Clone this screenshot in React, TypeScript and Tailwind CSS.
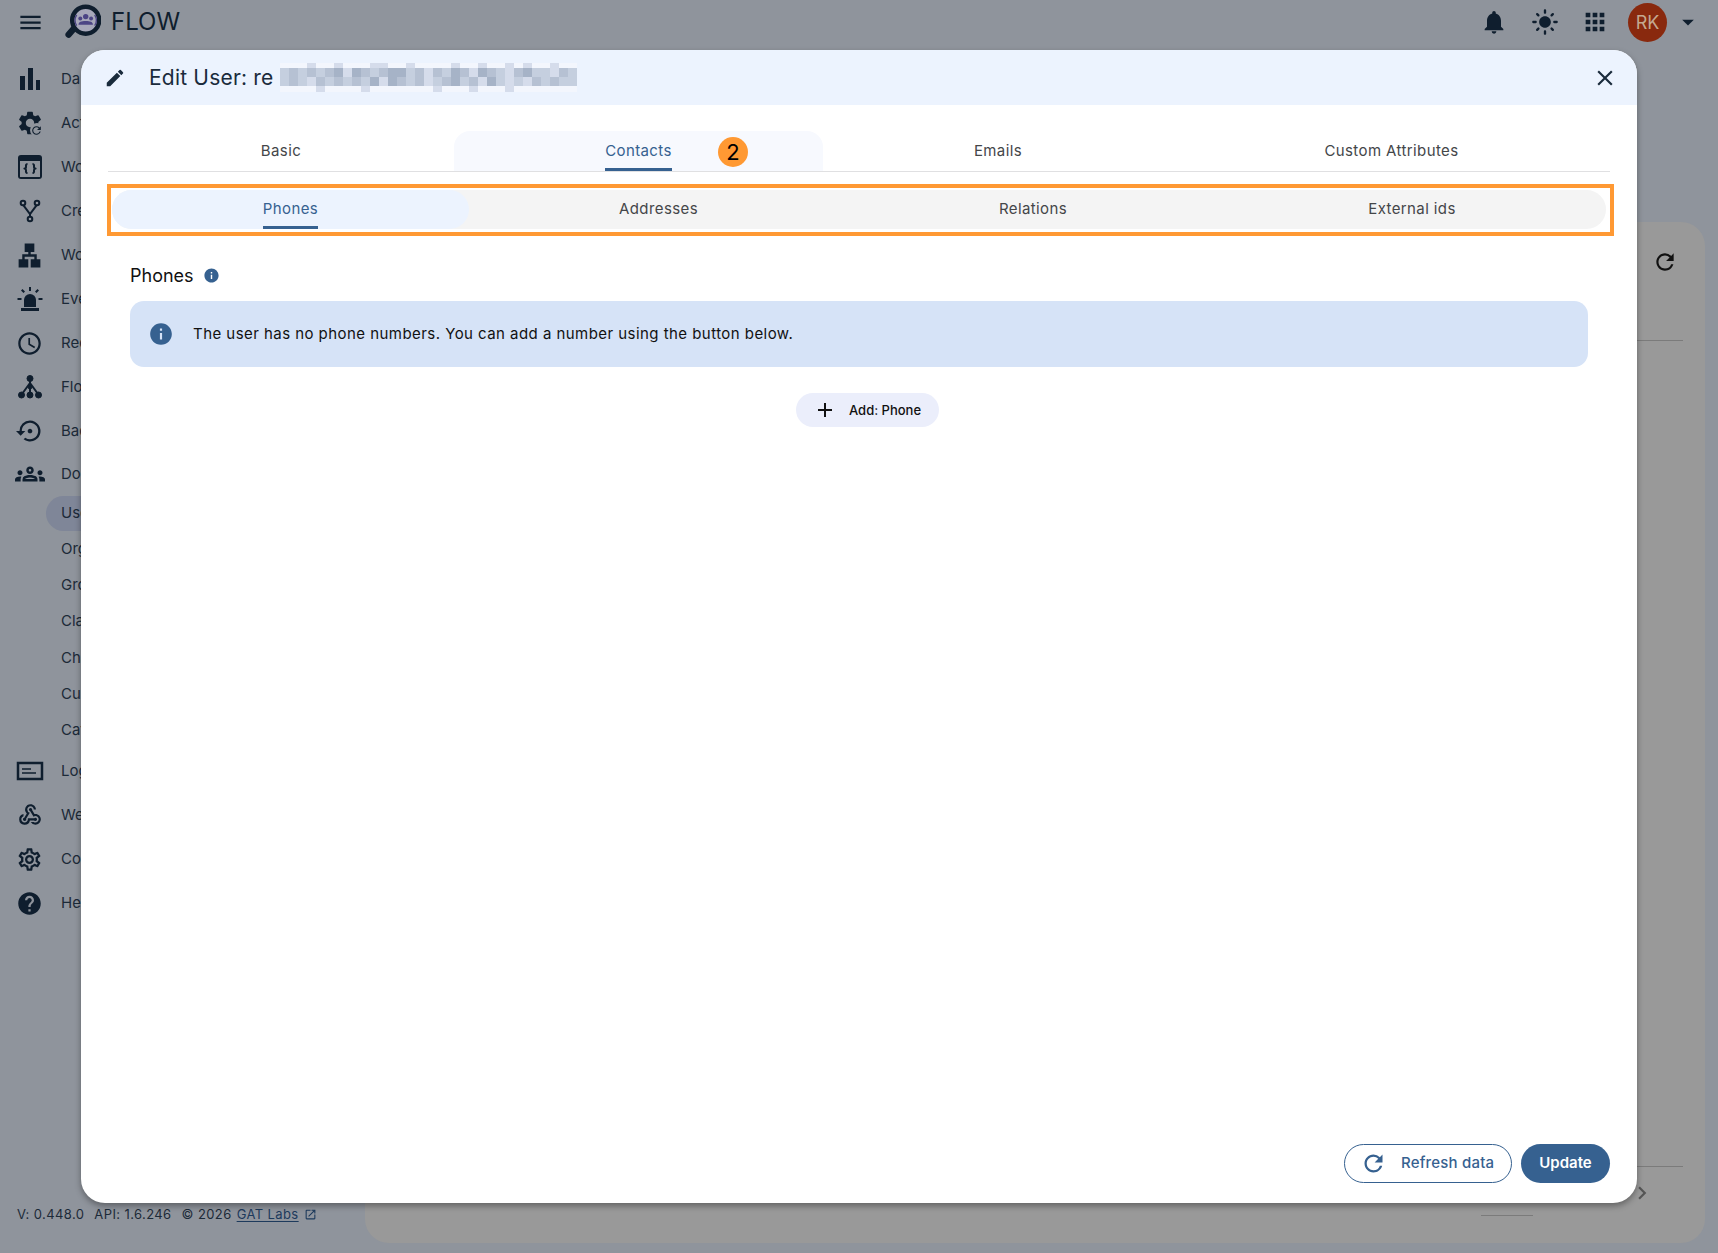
import type { ReactNode } from 'react';
import {
  MdAdd,
  MdApps,
  MdArrowDropDown,
  MdChevronRight,
  MdClose,
  MdEdit,
  MdHelp,
  MdInfo,
  MdLan,
  MdLightMode,
  MdMenu,
  MdNotifications,
  MdOpenInNew,
  MdOutlineGroups,
  MdOutlineSchedule,
  MdOutlineSettings,
  MdOutlineWebhook,
  MdRefresh,
  MdSettings,
  MdSettingsBackupRestore,
} from 'react-icons/md';

const iconClass = 'text-[#0f1e2e]';

function BarsIcon() {
  return (
    <svg width="28" height="28" viewBox="0 0 28 28" fill="#0f1e2e">
      <rect x="4" y="11" width="5" height="14" />
      <rect x="12" y="3" width="5" height="22" />
      <rect x="20" y="15" width="4" height="10" />
    </svg>
  );
}

function ActionsIcon() {
  return (
    <span className="relative block h-7 w-7">
      <MdSettings size={28} className={iconClass} />
      <span className="absolute right-0 bottom-0 flex h-[14px] w-[14px] items-center justify-center rounded-full bg-[#8f949c]">
        <MdRefresh size={13} className={iconClass} />
      </span>
    </span>
  );
}

function CodeWindowIcon() {
  return (
    <svg width="28" height="28" viewBox="0 0 28 28">
      <rect x="2" y="2" width="24" height="24" rx="3" fill="#0f1e2e" />
      <rect x="4" y="8" width="20" height="16" fill="#8f949c" />
      <path
        d="M11.5 11c-2 0-1.5 2-1.5 3s-1 1.5-1.5 1.5 1.5.5 1.5 1.5-.5 3 1.5 3M16.5 11c2 0 1.5 2 1.5 3s1 1.5 1.5 1.5-1.500.5-1.500 1.500.5 3-1.500 3"
        fill="none"
        stroke="#0f1e2e"
        strokeWidth="2"
      />
    </svg>
  );
}

function ForkIcon() {
  return (
    <svg width="28" height="28" viewBox="0 0 28 28" fill="none" stroke="#0f1e2e" strokeWidth="2">
      <circle cx="7" cy="6" r="2.300" />
      <circle cx="21" cy="6" r="2.300" />
      <circle cx="14" cy="22" r="2.300" />
      <path d="M7.500 8.300L14 17L20.500 8.300M14 17v2.700" />
    </svg>
  );
}

function SirenIcon() {
  return (
    <svg width="28" height="28" viewBox="0 0 28 28" fill="#0f1e2e">
      <rect x="5" y="23" width="18" height="3" />
      <path d="M8 22v-7a6 6 0 0 1 12 0v7z" />
      <rect x="13" y="2" width="2" height="4" />
      <rect x="1.500" y="13" width="4" height="2" />
      <rect x="22.500" y="13" width="4" height="2" />
      <path d="M5 5.500l1.500-1.500 2.500 2.500-1.500 1.500zM23 5.500l-1.500-1.500-2.500 2.500 1.500 1.500z" />
    </svg>
  );
}

function FlowIcon() {
  return (
    <svg width="28" height="28" viewBox="0 0 28 28" fill="#0f1e2e" stroke="#0f1e2e">
      <path d="M14 5v17M14 10l-8 11M14 10l8 11" strokeWidth="2" fill="none" />
      <circle cx="14" cy="5.500" r="3" />
      <circle cx="14" cy="14" r="2" />
      <circle cx="5.500" cy="22" r="3" />
      <circle cx="14" cy="22" r="3" />
      <circle cx="22.500" cy="22" r="3" />
    </svg>
  );
}

function LogIcon() {
  return (
    <svg width="28" height="28" viewBox="0 0 28 28" fill="none" stroke="#0f1e2e">
      <rect x="2" y="6" width="24" height="16" strokeWidth="2.500" />
      <path d="M6 12h9M6 16h14" strokeWidth="1.500" />
    </svg>
  );
}

function Logo() {
  return (
    <svg width="36" height="40" viewBox="0 0 40 44">
      <path d="M11 28L4 36" stroke="#0f1e2e" strokeWidth="7" strokeLinecap="round" />
      <circle cx="23" cy="20" r="15" fill="#a7a8ba" stroke="#0f1e2e" strokeWidth="5" />
      <circle cx="23" cy="16" r="3" fill="#4c4585" />
      <circle cx="17" cy="18" r="2.200" fill="#4c4585" />
      <circle cx="29" cy="18" r="2.200" fill="#4c4585" />
      <path d="M15 25c0-3 3-4 8-4s8 1 8 4z" fill="#4c4585" />
      <path d="M13 14a11 11 0 0 0 0 12M33 14a11 11 0 0 1 0 12" fill="none" stroke="#4c4585" strokeWidth="1.500" />
    </svg>
  );
}

function NavRow({ icon, label, className }: { icon: ReactNode; label: string; className: string }) {
  return (
    <div className={`flex items-center ${className}`}>
      <span className="flex w-[61px] justify-center pr-[2px]">{icon}</span>
      <span className="text-[15px] text-[#1c2a38]">{label}</span>
    </div>
  );
}

function SubRow({ label, active }: { label: string; active?: boolean }) {
  return (
    <div className="flex h-[36.2px] items-center">
      <div className={`ml-[46px] flex h-[35px] flex-1 items-center rounded-l-full pl-[15px] ${active ? 'bg-[#7f8698]' : ''}`}>
        <span className="text-[15px] text-[#1c2a38]">{label}</span>
      </div>
    </div>
  );
}

const mosaic = [
  '000100100011001000010010010100100',
  '232323414323442313243143213422132',
  '232132323241432312342314212132322',
  '000010000100000001000100010000000',
];
const mosaicColors = ['#f3f6fd', '#d5dceb', '#c5cfdf', '#b6c1d3', '#a6b3c7'];

// blurred part of the user name
function BlurredName() {
  return (
    <svg width="297" height="29" viewBox="0 0 297 29" className="ml-[6px] shrink-0">
      {mosaic.map((row, r) =>
        row.split('').map((c, i) => (
          <rect
            key={`${r}-${i}`}
            x={i * 9}
            y={r === 0 ? 0 : r === 1 ? 5 : r === 2 ? 14 : 23}
            width="9"
            height={r === 0 ? 5 : r === 3 ? 6 : 9}
            fill={mosaicColors[Number(c)]}
          />
        ))
      )}
    </svg>
  );
}

const mainTabs = [
  { label: 'Basic', className: 'w-[346px]' },
  { label: 'Contacts', className: 'w-[369px] rounded-t-2xl bg-[#f7f9fe]', active: true },
  { label: 'Emails', className: 'w-[350px]' },
  { label: 'Custom Attributes', className: 'w-[437px]' },
];

const subTabs = [
  { label: 'Phones', className: 'w-[357px] rounded-full bg-[#ecf3fe]', active: true },
  { label: 'Addresses', className: 'w-[379px]' },
  { label: 'Relations', className: 'w-[370px]' },
  { label: 'External ids', className: 'w-[388px]' },
];

function TabLabel({ label, active }: { label: string; active?: boolean }) {
  return (
    <span className={`relative flex h-full items-center text-[15px] tracking-[0.4px] ${active ? 'text-[#366190]' : 'text-[#444649]'}`}>
      {label}
      {active && <span className="absolute right-0 bottom-0 left-0 h-[3px] bg-[#366190]" />}
    </span>
  );
}

export default function App() {
  return (
    <div className="relative flex h-screen w-screen flex-col overflow-hidden bg-[#8f949c] font-['Inter',sans-serif]">
      <header className="flex h-11 shrink-0 items-center">
        <span className="ml-[16px] flex w-[28px] justify-center">
          <MdMenu size={27} className={iconClass} />
        </span>
        <span className="ml-[21px]">
          <Logo />
        </span>
        <span className="ml-[10px] text-[24px] leading-none text-[#0f1e2e]">FLOW</span>
        <div className="ml-auto flex items-center">
          <MdNotifications size={28} className={iconClass} />
          <MdLightMode size={28} className={`ml-[23px] ${iconClass}`} />
          <MdApps size={28} className={`ml-[22px] ${iconClass}`} />
          <span className="ml-[19px] flex h-[39px] w-[39px] items-center justify-center rounded-full bg-[#89290e] text-[18px] text-[#c4a890]">
            RK
          </span>
          <MdArrowDropDown size={28} className={`ml-[7px] mr-[16px] ${iconClass}`} />
        </div>
      </header>

      <div className="flex min-h-0 flex-1">
        <aside className="flex w-[365px] shrink-0 flex-col justify-between pt-[13px] pb-[29px]">
          <nav>
            <NavRow className="h-11" icon={<BarsIcon />} label="Da" />
            <NavRow className="h-11" icon={<ActionsIcon />} label="Act" />
            <NavRow className="h-11" icon={<CodeWindowIcon />} label="Wo" />
            <NavRow className="h-11" icon={<ForkIcon />} label="Cre" />
            <NavRow className="h-11" icon={<MdLan size={29} className={iconClass} />} label="Wo" />
            <NavRow className="h-11" icon={<SirenIcon />} label="Eve" />
            <NavRow className="h-11" icon={<MdOutlineSchedule size={27} className={iconClass} />} label="Rec" />
            <NavRow className="h-11" icon={<FlowIcon />} label="Flo" />
            <NavRow className="h-11" icon={<MdSettingsBackupRestore size={28} className={iconClass} />} label="Bac" />
            <NavRow className="h-[42px]" icon={<MdOutlineGroups size={30} className={iconClass} />} label="Dom" />
            <SubRow label="Use" active />
            <SubRow label="Org" />
            <SubRow label="Gro" />
            <SubRow label="Cla" />
            <SubRow label="Cha" />
            <SubRow label="Cus" />
            <SubRow label="Cat" />
            <div className="mt-[1px]">
              <NavRow className="h-11" icon={<LogIcon />} label="Log" />
              <NavRow className="h-11" icon={<MdOutlineWebhook size={26} className={iconClass} />} label="Web" />
              <NavRow className="h-11" icon={<MdOutlineSettings size={27} className={iconClass} />} label="Con" />
              <NavRow className="h-11" icon={<MdHelp size={27} className={iconClass} />} label="Hel" />
            </div>
          </nav>
          <div className="flex items-center pl-[17px] text-[13px] tracking-[0.4px] whitespace-nowrap text-[#1c2a38]">
            <span>V: 0.448.0</span>
            <span className="ml-[10px]">API: 1.6.246</span>
            <span className="ml-[10px]">© 2026</span>
            <span className="ml-[5px] text-[#1d3a5c] underline underline-offset-2">GAT Labs</span>
            <MdOpenInNew size={13} className="ml-[5px] text-[#1d3a5c]" />
          </div>
        </aside>

        <main className="flex-1 pt-[178px] pr-[13px] pb-[10px]">
          <section className="flex h-full flex-col rounded-3xl bg-[#999999]">
            <div className="flex h-[118px] items-start justify-end pt-[27px] pr-[27px]">
              <MdRefresh size={26} className="text-[#111]" />
            </div>
            <div className="mr-[22px] h-px bg-[#7b7b7b]" />
            <div className="flex-1" />
            <div className="mr-[22px] h-px bg-[#7b7b7b]" />
            <div className="flex h-[52px] items-center justify-end pr-[50px]">
              <div className="mt-[44px] mr-[96px] h-px w-[52px] bg-[#7b7b7b]" />
              <MdChevronRight size={26} className="text-[#555]" />
            </div>
            <div className="h-[24px]" />
          </section>
        </main>
      </div>

      {/* dialog */}
      <div className="absolute top-[50px] left-[81px] flex h-[1153px] w-[1556px] flex-col overflow-hidden rounded-3xl bg-white shadow-[0_3px_6px_rgba(0,0,0,0.35)]">
        <div className="flex h-[55px] shrink-0 items-center bg-[#ecf3fe]">
          <MdEdit size={22} className="ml-[23px] text-[#1a2b3c]" />
          <span className="mt-[1px] ml-[23px] text-[21px] tracking-[0.2px] whitespace-nowrap text-[#1a2b3c]">Edit User: re</span>
          <BlurredName />
          <MdClose size={26} className="mr-[19px] ml-auto text-[#1a2b3c]" />
        </div>

        <div className="flex min-h-0 flex-1 flex-col pt-[26px]">
          <div className="mx-[27px] flex h-[41px] shrink-0 border-b border-[#e0e0e2]">
            {mainTabs.map((tab) => (
              <div key={tab.label} className={`relative flex h-10 justify-center ${tab.className}`}>
                <TabLabel label={tab.label} active={tab.active} />
                {tab.active && (
                  <span className="absolute top-[6px] left-[264px] flex h-[30px] w-[30px] items-center justify-center rounded-full bg-[#ff9933] text-[22px] text-black">
                    2
                  </span>
                )}
              </div>
            ))}
          </div>

          <div className="mt-[12px] ml-[26px] h-[52px] w-[1507px] shrink-0 border-4 border-[#ff9933] pt-[2px] pl-[1px]">
            <div className="flex h-[39px] w-[1494px] rounded-full bg-[#f4f4f4]">
              {subTabs.map((tab) => (
                <div key={tab.label} className={`flex h-full justify-center ${tab.className}`}>
                  <TabLabel label={tab.label} active={tab.active} />
                </div>
              ))}
            </div>
          </div>

          <div className="flex min-h-0 flex-1 flex-col px-[49px] pt-[26px]">
            <div className="flex h-[27px] items-center">
              <span className="text-[18px] text-[#111]">Phones</span>
              <MdInfo size={17} className="ml-[9px] text-[#366190]" />
            </div>
            <div className="mt-[12px] flex h-[66px] items-center rounded-[14px] bg-[#d6e3f7]">
              <MdInfo size={26} className="ml-[18px] text-[#366190]" />
              <span className="ml-[19px] text-[15px] tracking-[0.45px] text-[#111]">
                The user has no phone numbers. You can add a number using the button below.
              </span>
            </div>
            <div className="mt-[26px] flex justify-center pl-[17px]">
              <button className="flex h-[34px] w-[143px] items-center rounded-full bg-[#ebeefb] pl-[17px] text-[13px] font-medium text-[#111]">
                <MdAdd size={24} className="text-[#111]" />
                <span className="mt-[1px] ml-[12px]">Add: Phone</span>
              </button>
            </div>
          </div>

          <div className="flex shrink-0 justify-end gap-[9px] pr-[27px] pb-[20px]">
            <button className="flex h-[39px] w-[168px] items-center rounded-full border border-[#366190] pl-[15px] text-[15px] font-medium tracking-[0.2px] text-[#366190]">
              <MdRefresh size={27} />
              <span className="ml-[14px]">Refresh data</span>
            </button>
            <button className="h-[39px] w-[89px] rounded-full bg-[#366190] text-[15px] font-semibold text-white">
              Update
            </button>
          </div>
        </div>
      </div>
    </div>
  );
}
